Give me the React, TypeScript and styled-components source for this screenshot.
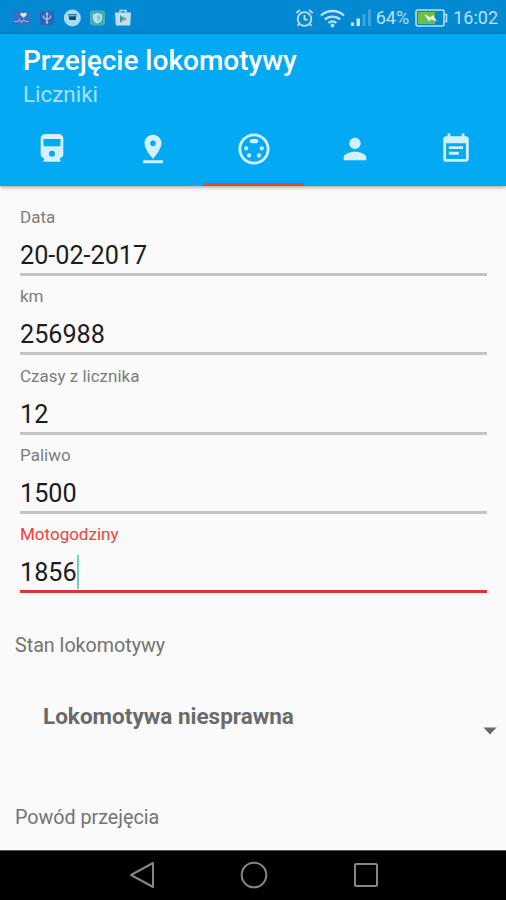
import React from "react";
import styled, { createGlobalStyle } from "styled-components";
import {
  MdPinDrop,
  MdSettingsInputSvideo,
  MdPerson,
  MdEventNote,
} from "react-icons/md";

const GlobalStyle = createGlobalStyle`
  * { box-sizing: border-box; }
  body { margin: 0; background: #fafafa; font-family: Roboto, "Noto Sans", sans-serif; }
`;

const Screen = styled.div`
  width: 506px;
  height: 900px;
  display: flex;
  flex-direction: column;
  overflow: hidden;
  background: #fafafa;
`;

const StatusBar = styled.header`
  height: 34px;
  flex: none;
  display: flex;
  align-items: center;
  justify-content: space-between;
  padding: 2px 8px 0 12px;
  background: #0388d2;
  color: #b9e1f7;
`;

const Notifications = styled.div`
  display: flex;
  align-items: center;
  gap: 6px;
`;

const SystemStatus = styled.div`
  display: flex;
  align-items: center;
  height: 32px;
`;

const StatusText = styled.span<{ $left: number }>`
  font-size: 18px;
  line-height: 32px;
  margin-left: ${(p) => p.$left}px;
`;

const StatusIcon = styled.svg<{ $left?: number }>`
  display: block;
  flex: none;
  margin-left: ${(p) => p.$left ?? 0}px;
`;

const AppBar = styled.div`
  height: 152px;
  flex: none;
  display: flex;
  flex-direction: column;
  background: #04a9f4;
  box-shadow: 0 1px 4px rgba(0, 0, 0, 0.4);
`;

const Title = styled.h1`
  margin: 10px 0 0 23px;
  font-size: 28px;
  line-height: 34px;
  font-weight: 500;
  color: #fff;
`;

const Subtitle = styled.div`
  margin-left: 23px;
  font-size: 22.4px;
  line-height: 32px;
  color: #a8e0fb;
`;

const Tabs = styled.nav`
  margin-top: auto;
  height: 72px;
  display: grid;
  grid-template-columns: repeat(5, 1fr);
  padding-left: 1px;
`;

const Tab = styled.div<{ $active?: boolean }>`
  display: flex;
  justify-content: center;
  align-items: center;
  font-size: 34px;
  color: #d2f0fd;
  border-bottom: 3px solid ${(p) => (p.$active ? "#e5492f" : "transparent")};
`;

const Form = styled.main`
  flex: 1;
  display: flex;
  flex-direction: column;
  padding: 20px 19px 0 20px;
`;

const Field = styled.label`
  height: 79.3px;
  flex: none;
  display: flex;
  flex-direction: column;
`;

const FieldLabel = styled.span<{ $error?: boolean }>`
  font-size: 17px;
  line-height: 22px;
  color: ${(p) => (p.$error ? "#f5403c" : "#7c7c7c")};
`;

const FieldValue = styled.span<{ $error?: boolean }>`
  height: 48px;
  display: flex;
  align-items: center;
  padding-top: 10px;
  font-size: 25.2px;
  color: #1c1c1c;
  border-bottom: ${(p) => (p.$error ? "3px solid #e03430" : "3px solid #c4c4c4")};
`;

const Caret = styled.i`
  width: 2px;
  height: 34px;
  margin-top: -2px;
  background: #74cdc6;
`;

const SectionLabel = styled.div<{ $top: number }>`
  margin: ${(p) => p.$top}px 0 0 -5px;
  font-size: 19.7px;
  line-height: 28px;
  color: #737373;
`;

const Select = styled.div`
  margin: 40px -10px 0 23px;
  height: 35px;
  display: flex;
  justify-content: space-between;
  font-size: 22.5px;
  line-height: 32px;
  font-weight: 700;
  color: #6a6a6a;
`;

const Arrow = styled.svg`
  align-self: flex-end;
`;

const NavBar = styled.footer`
  height: 50px;
  flex: none;
  display: flex;
  justify-content: center;
  align-items: center;
  gap: 84px;
  padding: 0 0 2px 1px;
  background: #000;
  border-top: 1px solid #555;
`;

function TrainIcon() {
  return (
    <svg width="34" height="34" viewBox="0 0 24 24" fill="currentColor">
      <path
        fillRule="evenodd"
        d="M4 5c0-2.600 1.500-3.600 4-3.600h8c2.500 0 4 1 4 3.600v10.500c0 1.200-.7 2.200-2 2.800l-.5.700.5 1V21H6v-1l.5-1-.5-.7c-1.300-.6-2-1.600-2-2.800ZM6 5v5h12V5ZM12 13.200a2.100 2.100 0 1 0 0 4.200a2.100 2.100 0 1 0 0-4.200Z"
      />
    </svg>
  );
}

const tabs = [
  { name: "train", Icon: TrainIcon },
  { name: "place", Icon: MdPinDrop },
  { name: "counters", Icon: MdSettingsInputSvideo, active: true },
  { name: "person", Icon: MdPerson },
  { name: "notes", Icon: MdEventNote },
];

const fields = [
  { label: "Data", value: "20-02-2017" },
  { label: "km", value: "256988" },
  { label: "Czasy z licznika", value: "12" },
  { label: "Paliwo", value: "1500" },
  { label: "Motogodziny", value: "1856", error: true },
];

function NotificationIcons() {
  return (
    <Notifications>
      <StatusIcon width="19" height="18" viewBox="0 0 19 18">
        <rect x="2" y="2" width="15" height="14" rx="2" fill="#3a6cc0" />
        <path d="M11.500 9 8.200 5.800a1.900 1.900 0 0 1 3.300-1.500 1.900 1.900 0 0 1 3.300 1.500Z" fill="#cce9fa" />
        <path d="M2 12.500h4l1.500-2 2 3 2-2.500 2 1.500h3" fill="none" stroke="#8db5e6" strokeWidth="1.100" />
      </StatusIcon>
      <StatusIcon width="19" height="18" viewBox="0 0 19 18">
        <rect x="3" y="2" width="14" height="14" rx="2" fill="#3160b8" />
        <path d="M10 4v10M6.500 6.500v2L10 11l3.500-2.500v-2" fill="none" stroke="#a3c4ec" strokeWidth="1.400" />
        <circle cx="10" cy="13.500" r="1.300" fill="#a3c4ec" />
        <path d="m10 2.800 2 2.700H8Z" fill="#a3c4ec" />
      </StatusIcon>
      <StatusIcon width="19" height="18" viewBox="0 0 19 18">
        <circle cx="10.300" cy="9" r="8.500" fill="#a5dcf5" />
        <path d="M6 5h9v1.500H6Z" fill="#367d9f" />
        <path d="M6.700 7.200h7.600L13.600 11H7.400Z" fill="#174b67" />
      </StatusIcon>
      <StatusIcon width="19" height="18" viewBox="0 0 19 18">
        <rect x="3" y="1.500" width="15" height="15" rx="3" fill="#4cabb9" />
        <path d="M10.500 4 15 5.500V9c0 3-2 4.500-4.500 5.500C8 13.500 6 12 6 9V5.500Z" fill="#b8e3e9" />
        <path d="M10.500 6 13 7v2.500c0 1.500-1 2.300-2.500 3Z" fill="#78c4d0" />
      </StatusIcon>
      <StatusIcon width="20" height="18" viewBox="0 0 20 18">
        <path d="M8 4V1.500h6V4" fill="none" stroke="#bddff0" strokeWidth="1.400" />
        <path d="M3 3.500h16L18.200 16.500H3.800Z" fill="#bddff0" />
        <path d="M8 6v8l3.500-4Z" fill="#2598d0" />
        <path d="m8 6 7 4-3 .8Z" fill="#4cb47b" />
        <path d="m8 14 3.300-4L15 10Z" fill="#d99568" />
      </StatusIcon>
    </Notifications>
  );
}

function StatusIndicators() {
  return (
    <SystemStatus>
      <StatusIcon width="19" height="20" viewBox="0 0 19 20" fill="none" stroke="#b9e1f7" strokeWidth="1.800">
        <circle cx="9.500" cy="11" r="6.800" />
        <path d="M9.500 7v4.300l3 .7M1.300 5 5 2M17.700 5 14 2M4 16l-1.500 2M15 16l1.500 2" />
      </StatusIcon>
      <StatusIcon $left={6} width="25" height="19" viewBox="0 0 25 19" fill="none" stroke="#b9e1f7" strokeWidth="2.300">
        <path d="M1 6.500a17 17 0 0 1 23 0M4.800 10.500a11.500 11.500 0 0 1 15.400 0M8.500 14a6 6 0 0 1 8 0" />
        <circle cx="12.500" cy="16.500" r="1.900" fill="#b9e1f7" stroke="none" />
      </StatusIcon>
      <StatusIcon $left={6} width="21" height="18" viewBox="0 0 21 18">
        <rect x="0" y="13.500" width="3" height="3.500" fill="#c8eafb" />
        <rect x="5.500" y="9.500" width="3.500" height="7.500" fill="#c8eafb" />
        <rect x="11.500" y="5" width="3" height="12" fill="#3ea6df" />
        <rect x="17" y="0.500" width="3" height="16.500" fill="#3ea6df" />
      </StatusIcon>
      <StatusText $left={4}>64%</StatusText>
      <StatusIcon $left={6} width="33" height="18" viewBox="0 0 33 18">
        <rect x="1" y="1" width="28" height="16" rx="2" fill="none" stroke="#b9e1f7" strokeWidth="1.600" />
        <path d="M30 5.500h1.500v7H30" fill="none" stroke="#b9e1f7" strokeWidth="1.600" />
        <rect x="3" y="3" width="17" height="12" fill="#6cc04a" />
        <path d="m9 5 6.500 3.200L18 6l4 6.500-6-2.200-2 2.200Z" fill="#e4f6ea" />
      </StatusIcon>
      <StatusText $left={5}>16:02</StatusText>
    </SystemStatus>
  );
}

export default function App() {
  return (
    <>
      <GlobalStyle />
      <Screen>
        <StatusBar>
          <NotificationIcons />
          <StatusIndicators />
        </StatusBar>
        <AppBar>
          <Title>Przejęcie lokomotywy</Title>
          <Subtitle>Liczniki</Subtitle>
          <Tabs>
            {tabs.map(({ name, Icon, active }) => (
              <Tab key={name} $active={active}>
                <Icon />
              </Tab>
            ))}
          </Tabs>
        </AppBar>
        <Form>
          {fields.map(({ label, value, error }) => (
            <Field key={label}>
              <FieldLabel $error={error}>{label}</FieldLabel>
              <FieldValue $error={error}>
                {value}
                {error && <Caret />}
              </FieldValue>
            </Field>
          ))}
          <SectionLabel $top={30}>Stan lokomotywy</SectionLabel>
          <Select>
            Lokomotywa niesprawna
            <Arrow width="14" height="8" viewBox="0 0 14 8">
              <path d="M0.500 0.500h13L7 7.500Z" fill="#686868" />
            </Arrow>
          </Select>
          <SectionLabel $top={69}>Powód przejęcia</SectionLabel>
        </Form>
        <NavBar>
          <svg width="28" height="28" viewBox="0 0 28 28" fill="none" stroke="#858585" strokeWidth="2">
            <path d="M25 2v24L3 14Z" strokeLinejoin="round" />
          </svg>
          <svg width="28" height="28" viewBox="0 0 28 28" fill="none" stroke="#858585" strokeWidth="2">
            <circle cx="14" cy="14" r="12.300" />
          </svg>
          <svg width="28" height="28" viewBox="0 0 28 28" fill="none" stroke="#858585" strokeWidth="2">
            <rect x="3" y="3" width="22" height="22" rx="1" />
          </svg>
        </NavBar>
      </Screen>
    </>
  );
}
